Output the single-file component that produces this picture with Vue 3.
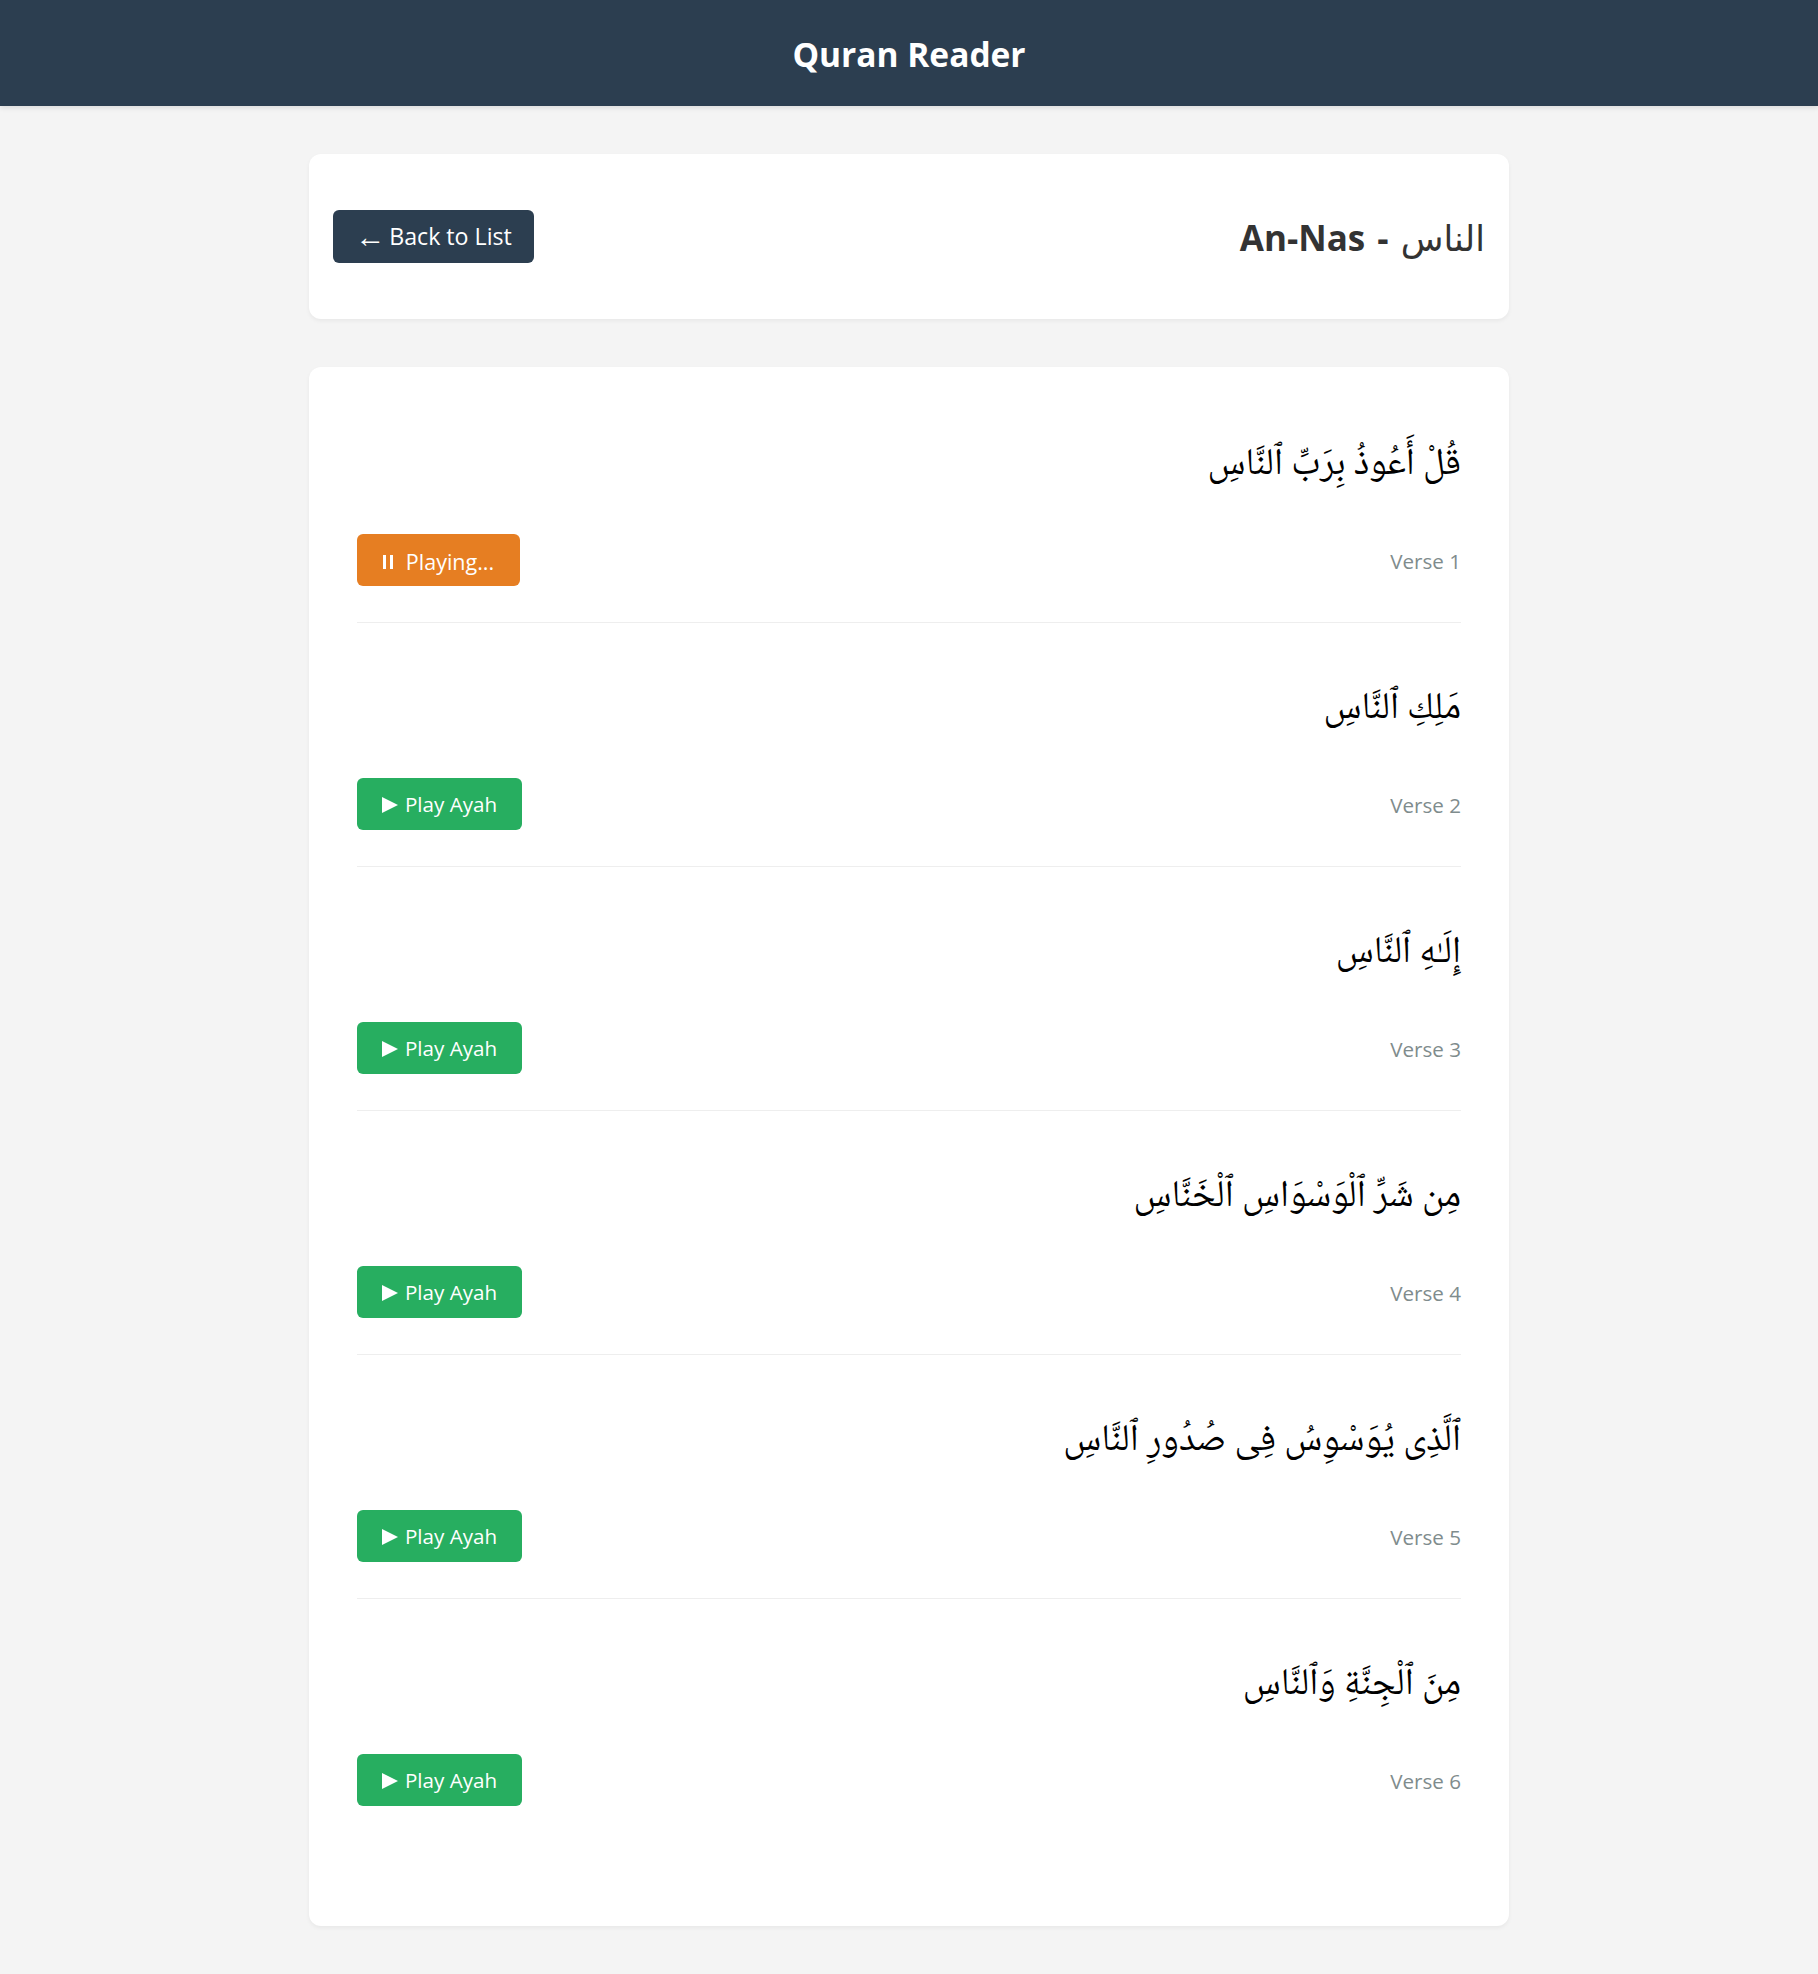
<template>
  <div class="app">
    <header class="top-bar">
      <h1>Quran Reader</h1>
    </header>
    <main class="container">
      <section class="card surah-head">
        <button class="back-btn"><span class="arrow">←</span> Back to List</button>
        <h2>An-Nas - <span class="name-ar">الناس</span></h2>
      </section>
      <section class="card verses">
        <div class="verse" v-for="(ayah, i) in ayahs" :key="i">
          <p class="arabic" dir="rtl">{{ ayah }}</p>
          <div class="verse-foot">
            <button class="play-btn" :class="{ playing: i === playingIndex }">
              <template v-if="i === playingIndex">
                <span class="pause-icon"></span> Playing...
              </template>
              <template v-else>
                <svg class="play-icon" viewBox="0 0 16 16"><path d="M0 0L16 8L0 16Z" fill="#fff" /></svg> Play Ayah
              </template>
            </button>
            <span class="verse-no">Verse {{ i + 1 }}</span>
          </div>
        </div>
      </section>
    </main>
  </div>
</template>

<script setup>
const playingIndex = 0;
const ayahs = [
  "قُلْ أَعُوذُ بِرَبِّ ٱلنَّاسِ",
  "مَلِكِ ٱلنَّاسِ",
  "إِلَـٰهِ ٱلنَّاسِ",
  "مِن شَرِّ ٱلْوَسْوَاسِ ٱلْخَنَّاسِ",
  "ٱلَّذِى يُوَسْوِسُ فِى صُدُورِ ٱلنَّاسِ",
  "مِنَ ٱلْجِنَّةِ وَٱلنَّاسِ"
];
</script>

<style>
body {
  margin: 0;
  background: #f4f4f4;
}
</style>

<style scoped>
.app {
  min-height: 1974px;
  font-family: "Open Sans", "Noto Sans", "DejaVu Sans", sans-serif;
  color: #333;
}

.top-bar {
  height: 106px;
  background: #2c3e50;
  color: #fff;
  display: flex;
  align-items: center;
  justify-content: center;
  box-shadow: 0 2px 5px rgba(0, 0, 0, 0.1);
}

.top-bar h1 {
  margin: 2px 0 0;
  font-size: 33.5px;
  font-weight: 700;
}

.container {
  width: 1200px;
  margin: 48px auto 0;
}

.card {
  background: #fff;
  border-radius: 12px;
  box-shadow: 0 2px 4px rgba(0, 0, 0, 0.05);
}

.surah-head {
  display: flex;
  justify-content: space-between;
  align-items: center;
  height: 165px;
  padding: 0 24px;
  box-sizing: border-box;
  margin-bottom: 48px;
}

.surah-head h2 {
  margin: 2px 0 0;
  font-size: 35px;
  font-weight: 700;
  word-spacing: 3px;
}

.name-ar {
  font-size: 35px;
  font-weight: 400;
}

.back-btn {
  display: flex;
  align-items: center;
  justify-content: center;
  gap: 4px;
  width: 201px;
  height: 53px;
  margin-top: -1px;
  border: none;
  border-radius: 6px;
  background: #2c3e50;
  color: #fff;
  font: inherit;
  font-size: 23.2px;
  padding: 0;
}

.arrow {
  font-family: "Liberation Serif", serif;
  font-size: 30px;
  line-height: 1;
  margin-top: 1px;
}

.verses {
  padding: 48px 48px 48px;
  height: 1559px;
  box-sizing: border-box;
}

.verse {
  padding-bottom: 36px;
  margin-bottom: 36px;
  border-bottom: 1px solid #eee;
}

.verse:last-child {
  border-bottom: none;
}

.arabic {
  margin: 0 0 17px;
  font-family: "Noto Naskh Arabic", "Amiri", "DejaVu Serif", "DejaVu Sans", serif;
  font-size: 37.5px;
  line-height: 102px;
  color: #000;
}

.verse-foot {
  display: flex;
  justify-content: space-between;
  align-items: center;
}

.play-btn {
  display: flex;
  align-items: center;
  justify-content: center;
  gap: 7px;
  width: 165px;
  height: 52px;
  border: none;
  border-radius: 6px;
  background: #27ae60;
  color: #fff;
  font: inherit;
  font-size: 20.6px;
  padding: 0;
}

.play-btn.playing {
  width: 163px;
  gap: 13px;
  padding-top: 2px;
  background: #e67e22;
  font-size: 21.5px;
}

.play-icon {
  width: 16px;
  height: 16px;
  margin-top: 2px;
}

.pause-icon {
  width: 10px;
  height: 14px;
  margin-top: 2px;
  border-left: 3px solid #fff;
  border-right: 3px solid #fff;
  box-sizing: border-box;
}

.verse-no {
  margin-top: 2px;
  font-size: 20.6px;
  color: #7f8c8d;
}
</style>
